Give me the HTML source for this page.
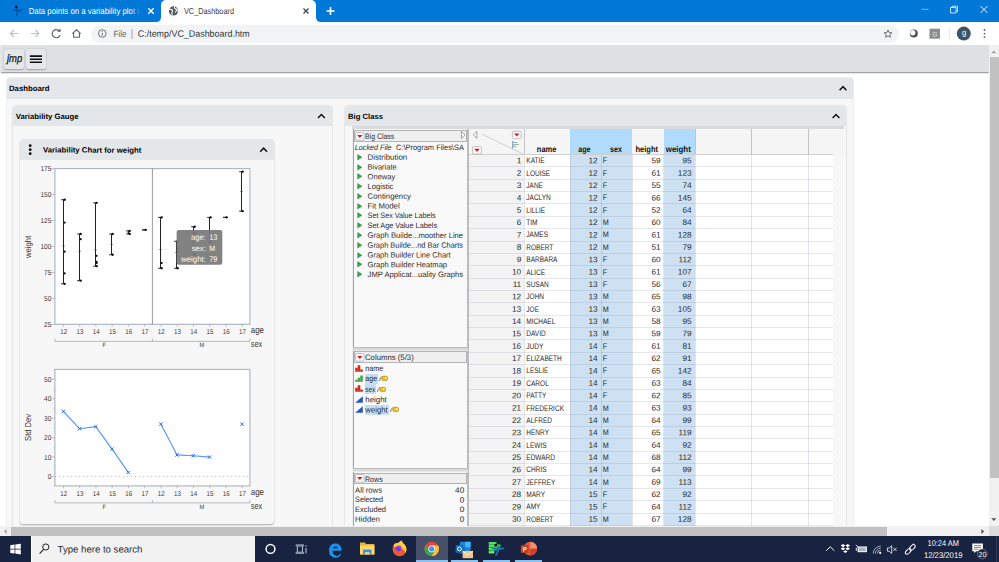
<!DOCTYPE html><html><head><meta charset="utf-8"><title>VC_Dashboard</title><style>html,body{margin:0;padding:0}
body{width:999px;height:562px;overflow:hidden;position:relative;background:#fff;font-family:"Liberation Sans",sans-serif;color:#000}
div,span,svg{position:absolute;box-sizing:border-box}
.t{white-space:nowrap;line-height:1}
#tabbar{left:0;top:0;width:999px;height:22px;background:#0078d7}
#tab2{left:161px;top:0;width:155px;height:22px;background:#fff;border-radius:5px 5px 0 0}
#addr{left:0;top:22px;width:999px;height:23px;background:#fff}
#pill{left:91px;top:25px;width:808px;height:18px;border-radius:9px;background:#f1f3f4}
#jbar{left:0.8px;top:45px;width:988px;height:27.2px;background:#dfe2e5;box-shadow:0 0.6px 1.2px rgba(0,0,0,.45)}
.jbtn{top:49.1px;height:20px;border-radius:2.2px;background:#e5e8eb;box-shadow:0 0.5px 1.6px rgba(0,0,0,.3)}
.panel{background:#f7f7f7;border-radius:3.5px;box-shadow:0 0.3px 1.6px rgba(0,0,0,.3)}
.phead{left:0;top:0;height:20px;background:#e4e7ea;border-radius:3.5px 3.5px 0 0}
.ptitle{font-weight:bold;font-size:9.2px;white-space:nowrap;line-height:1}
/* table */
#tbl{left:0;top:0;width:0;height:0;font-size:9.4px}
.thbg{background:#f5f5f5}
.bh{background:#b0dbfc}
.bc{background:#cde1f3}
.rh{background:#f3f3f3}
.hl{left:469.4px;width:363.9px;height:1px;background:rgba(110,110,150,0.17)}
.vl{top:154.6px;width:1px;height:373px;background:rgba(110,110,150,0.19)}
.vh{top:129px;width:1px;height:25.6px;background:#c4c4c4}
.th{top:144px;height:10px;text-align:center;font-weight:bold;font-size:9.2px;line-height:10px;white-space:nowrap}
.tr{left:0;height:12.4px;width:0}
.c{top:0;height:12.4px;line-height:12.2px;white-space:nowrap;color:#222}
.rn{left:469.4px;width:52px;text-align:right}
.nm{left:526.6px}
.ag{left:570px;width:28.5px;text-align:right}
.sx{left:602.8px}
.ht{left:632.4px;width:28.6px;text-align:right}
.wt{left:663.7px;width:28.8px;text-align:right}
/* left data panel */
.lp{font-size:9.2px;color:#222}
.lp .t{line-height:10px}
/* chart text */
.ax{font-size:7px;fill:#333}
/* taskbar */
#task{left:0;top:535.8px;width:999px;height:26.2px;background:#182241}
.f{transform-origin:0 50%}
svg.tx text{font-family:"Liberation Sans",sans-serif;white-space:pre;text-rendering:geometricPrecision}
</style></head><body>
<div id="jbar"></div>
<div class="jbtn" style="left:4px;width:19.5px"></div>
<div class="jbtn" style="left:26px;width:20px"></div>

<svg style="left:0;top:45px" width="60" height="28" viewBox="0 45 60 28"><path d="M29.9 56.1 H42 M29.9 59.2 H42 M29.9 62.3 H42" stroke="#111" stroke-width="1.6"/></svg>
<div class="panel" style="left:6.7px;top:78.3px;width:846.6px;height:470px"><div class="phead" style="width:846.6px;height:20.3px"></div></div>

<div class="panel" style="left:12.6px;top:105.8px;width:319.7px;height:440px"><div class="phead" style="width:319.7px;height:19.8px"></div></div>

<div class="panel" style="left:19.8px;top:139.9px;width:253.9px;height:384px"><div class="phead" style="width:253.9px;height:19.7px"></div></div>

<div class="panel" style="left:345.3px;top:105.8px;width:501.1px;height:440px"><div class="phead" style="width:501.1px;height:19.8px"></div></div>

<svg style="left:0;top:78px" width="999" height="100" viewBox="0 78 999 100">
<path d="M839.6 90.3 L843 86.7 L846.4 90.3" stroke="#111" stroke-width="1.5" fill="none"/>
<path d="M318.0 118.1 L321.4 114.5 L324.79999999999995 118.1" stroke="#111" stroke-width="1.5" fill="none"/>
<path d="M832.6 118.1 L836 114.5 L839.4 118.1" stroke="#111" stroke-width="1.5" fill="none"/>
<path d="M260.20000000000005 151.8 L263.6 148.2 L267.0 151.8" stroke="#111" stroke-width="1.5" fill="none"/>
<circle cx="30.2" cy="145.7" r="1.4" fill="#111"/>
<circle cx="30.2" cy="149.7" r="1.4" fill="#111"/>
<circle cx="30.2" cy="153.7" r="1.4" fill="#111"/>
</svg>
<svg style="left:0;top:160px" width="340" height="200" viewBox="0 160 340 200">
<rect x="54.9" y="168.6" width="195.00" height="155.70" fill="#fff" stroke="#a9b4bf" stroke-width="1.1"/>
<path d="M152.40 168.6 V324.3" stroke="#707070" stroke-width="0.7"/>
<path d="M51.3 168.60 H54.9" stroke="#98a0a8" stroke-width="0.6"/>
<path d="M51.3 194.55 H54.9" stroke="#98a0a8" stroke-width="0.6"/>
<path d="M51.3 220.50 H54.9" stroke="#98a0a8" stroke-width="0.6"/>
<path d="M51.3 246.45 H54.9" stroke="#98a0a8" stroke-width="0.6"/>
<path d="M51.3 272.40 H54.9" stroke="#98a0a8" stroke-width="0.6"/>
<path d="M51.3 298.35 H54.9" stroke="#98a0a8" stroke-width="0.6"/>
<path d="M51.3 324.30 H54.9" stroke="#98a0a8" stroke-width="0.6"/>
<path d="M63.42 324.3 v2.4" stroke="#98a0a8" stroke-width="0.6"/>
<path d="M79.68 324.3 v2.4" stroke="#98a0a8" stroke-width="0.6"/>
<path d="M95.93 324.3 v2.4" stroke="#98a0a8" stroke-width="0.6"/>
<path d="M112.18 324.3 v2.4" stroke="#98a0a8" stroke-width="0.6"/>
<path d="M128.43 324.3 v2.4" stroke="#98a0a8" stroke-width="0.6"/>
<path d="M144.68 324.3 v2.4" stroke="#98a0a8" stroke-width="0.6"/>
<path d="M160.93 324.3 v2.4" stroke="#98a0a8" stroke-width="0.6"/>
<path d="M177.18 324.3 v2.4" stroke="#98a0a8" stroke-width="0.6"/>
<path d="M193.43 324.3 v2.4" stroke="#98a0a8" stroke-width="0.6"/>
<path d="M209.68 324.3 v2.4" stroke="#98a0a8" stroke-width="0.6"/>
<path d="M225.93 324.3 v2.4" stroke="#98a0a8" stroke-width="0.6"/>
<path d="M242.18 324.3 v2.4" stroke="#98a0a8" stroke-width="0.6"/>
<path d="M54.9 338.4 V341.4 H249.9 V338.4 M152.40 338.4 V341.4" stroke="#98a0a8" stroke-width="0.7" fill="none"/>
<path d="M63.50 199.74 V283.82" stroke="#222" stroke-width="1"/>
<path d="M61.20 199.74 h4.6 M61.20 283.82 h4.6" stroke="#222" stroke-width="1"/>
<path d="M62.10 246.24 h2.8" stroke="#444" stroke-width="0.6"/>
<circle cx="64.60" cy="251.64" r="1.15" fill="#111"/>
<circle cx="64.60" cy="222.58" r="1.15" fill="#111"/>
<circle cx="64.60" cy="273.44" r="1.15" fill="#111"/>
<circle cx="64.60" cy="199.74" r="1.15" fill="#111"/>
<circle cx="64.60" cy="283.82" r="1.15" fill="#111"/>
<path d="M79.50 233.99 V280.70" stroke="#222" stroke-width="1"/>
<path d="M77.20 233.99 h4.6 M77.20 280.70 h4.6" stroke="#222" stroke-width="1"/>
<path d="M78.10 251.29 h2.8" stroke="#444" stroke-width="0.6"/>
<circle cx="80.60" cy="233.99" r="1.15" fill="#111"/>
<circle cx="80.60" cy="239.18" r="1.15" fill="#111"/>
<circle cx="80.60" cy="280.70" r="1.15" fill="#111"/>
<path d="M95.50 202.85 V266.17" stroke="#222" stroke-width="1"/>
<path d="M93.20 202.85 h4.6 M93.20 266.17 h4.6" stroke="#222" stroke-width="1"/>
<path d="M94.10 249.98 h2.8" stroke="#444" stroke-width="0.6"/>
<circle cx="96.60" cy="266.17" r="1.15" fill="#111"/>
<circle cx="96.60" cy="255.79" r="1.15" fill="#111"/>
<circle cx="96.60" cy="202.85" r="1.15" fill="#111"/>
<circle cx="96.60" cy="263.06" r="1.15" fill="#111"/>
<circle cx="96.60" cy="262.02" r="1.15" fill="#111"/>
<path d="M111.50 233.99 V254.75" stroke="#222" stroke-width="1"/>
<path d="M109.20 233.99 h4.6 M109.20 254.75 h4.6" stroke="#222" stroke-width="1"/>
<path d="M110.10 244.37 h2.8" stroke="#444" stroke-width="0.6"/>
<circle cx="112.60" cy="254.75" r="1.15" fill="#111"/>
<circle cx="112.60" cy="233.99" r="1.15" fill="#111"/>
<path d="M128.50 230.88 V233.99" stroke="#222" stroke-width="1"/>
<path d="M126.20 230.88 h4.6 M126.20 233.99 h4.6" stroke="#222" stroke-width="1"/>
<path d="M127.10 232.44 h2.8" stroke="#444" stroke-width="0.6"/>
<circle cx="129.60" cy="233.99" r="1.15" fill="#111"/>
<circle cx="129.60" cy="230.88" r="1.15" fill="#111"/>
<path d="M144.50 229.84 V229.84" stroke="#222" stroke-width="1"/>
<path d="M142.20 229.84 h4.6 M142.20 229.84 h4.6" stroke="#222" stroke-width="1"/>
<path d="M143.10 229.84 h2.8" stroke="#444" stroke-width="0.6"/>
<circle cx="145.60" cy="229.84" r="1.15" fill="#111"/>
<path d="M160.50 217.39 V268.25" stroke="#222" stroke-width="1"/>
<path d="M158.20 217.39 h4.6 M158.20 268.25 h4.6" stroke="#222" stroke-width="1"/>
<path d="M159.10 249.56 h2.8" stroke="#444" stroke-width="0.6"/>
<circle cx="161.60" cy="263.06" r="1.15" fill="#111"/>
<circle cx="161.60" cy="217.39" r="1.15" fill="#111"/>
<circle cx="161.60" cy="268.25" r="1.15" fill="#111"/>
<path d="M176.50 241.26 V268.25" stroke="#222" stroke-width="1"/>
<path d="M174.20 241.26 h4.6 M174.20 268.25 h4.6" stroke="#222" stroke-width="1"/>
<path d="M175.10 252.42 h2.8" stroke="#444" stroke-width="0.6"/>
<circle cx="177.60" cy="248.53" r="1.15" fill="#111"/>
<circle cx="177.60" cy="241.26" r="1.15" fill="#111"/>
<circle cx="177.60" cy="251.64" r="1.15" fill="#111"/>
<circle cx="177.60" cy="268.25" r="1.15" fill="#111"/>
<path d="M193.50 226.73 V254.75" stroke="#222" stroke-width="1"/>
<path d="M191.20 226.73 h4.6 M191.20 254.75 h4.6" stroke="#222" stroke-width="1"/>
<path d="M192.10 242.45 h2.8" stroke="#444" stroke-width="0.6"/>
<circle cx="194.60" cy="253.72" r="1.15" fill="#111"/>
<circle cx="194.60" cy="247.49" r="1.15" fill="#111"/>
<circle cx="194.60" cy="226.73" r="1.15" fill="#111"/>
<circle cx="194.60" cy="254.75" r="1.15" fill="#111"/>
<circle cx="194.60" cy="233.99" r="1.15" fill="#111"/>
<circle cx="194.60" cy="247.49" r="1.15" fill="#111"/>
<circle cx="194.60" cy="232.96" r="1.15" fill="#111"/>
<path d="M209.50 217.39 V242.30" stroke="#222" stroke-width="1"/>
<path d="M207.20 217.39 h4.6 M207.20 242.30 h4.6" stroke="#222" stroke-width="1"/>
<path d="M208.10 235.24 h2.8" stroke="#444" stroke-width="0.6"/>
<circle cx="210.60" cy="217.39" r="1.15" fill="#111"/>
<circle cx="210.60" cy="235.03" r="1.15" fill="#111"/>
<circle cx="210.60" cy="241.26" r="1.15" fill="#111"/>
<circle cx="210.60" cy="242.30" r="1.15" fill="#111"/>
<circle cx="210.60" cy="240.22" r="1.15" fill="#111"/>
<path d="M225.50 217.39 V217.39" stroke="#222" stroke-width="1"/>
<path d="M223.20 217.39 h4.6 M223.20 217.39 h4.6" stroke="#222" stroke-width="1"/>
<path d="M224.10 217.39 h2.8" stroke="#444" stroke-width="0.6"/>
<circle cx="226.60" cy="217.39" r="1.15" fill="#111"/>
<path d="M241.50 171.71 V211.16" stroke="#222" stroke-width="1"/>
<path d="M239.20 171.71 h4.6 M239.20 211.16 h4.6" stroke="#222" stroke-width="1"/>
<path d="M240.10 191.44 h2.8" stroke="#444" stroke-width="0.6"/>
<circle cx="242.60" cy="211.16" r="1.15" fill="#111"/>
<circle cx="242.60" cy="171.71" r="1.15" fill="#111"/>
<rect x="176.6" y="229.9" width="45.7" height="34.9" rx="2.2" fill="#7a7a7a" fill-opacity="0.94"/>
</svg>






























<svg style="left:0;top:360px" width="340" height="170" viewBox="0 360 340 170">
<rect x="54.9" y="369.4" width="195.00" height="116.50" fill="#fff" stroke="#a9b4bf" stroke-width="1.1"/>
<path d="M54.9 476.6 H249.9" stroke="#b4b4b4" stroke-width="0.8" stroke-dasharray="1.3 2.7"/>
<path d="M51.3 379.35 H54.9" stroke="#98a0a8" stroke-width="0.6"/>
<path d="M51.3 398.78 H54.9" stroke="#98a0a8" stroke-width="0.6"/>
<path d="M51.3 418.21 H54.9" stroke="#98a0a8" stroke-width="0.6"/>
<path d="M51.3 437.64 H54.9" stroke="#98a0a8" stroke-width="0.6"/>
<path d="M51.3 457.07 H54.9" stroke="#98a0a8" stroke-width="0.6"/>
<path d="M51.3 476.50 H54.9" stroke="#98a0a8" stroke-width="0.6"/>
<path d="M53.5 466.79 H54.9" stroke="#a9b4bf" stroke-width="0.6"/>
<path d="M53.5 447.36 H54.9" stroke="#a9b4bf" stroke-width="0.6"/>
<path d="M53.5 427.93 H54.9" stroke="#a9b4bf" stroke-width="0.6"/>
<path d="M53.5 408.50 H54.9" stroke="#a9b4bf" stroke-width="0.6"/>
<path d="M53.5 389.06 H54.9" stroke="#a9b4bf" stroke-width="0.6"/>
<path d="M53.5 369.63 H54.9" stroke="#a9b4bf" stroke-width="0.6"/>
<path d="M63.42 485.9 v2.4" stroke="#98a0a8" stroke-width="0.6"/>
<path d="M79.68 485.9 v2.4" stroke="#98a0a8" stroke-width="0.6"/>
<path d="M95.93 485.9 v2.4" stroke="#98a0a8" stroke-width="0.6"/>
<path d="M112.18 485.9 v2.4" stroke="#98a0a8" stroke-width="0.6"/>
<path d="M128.43 485.9 v2.4" stroke="#98a0a8" stroke-width="0.6"/>
<path d="M144.68 485.9 v2.4" stroke="#98a0a8" stroke-width="0.6"/>
<path d="M160.93 485.9 v2.4" stroke="#98a0a8" stroke-width="0.6"/>
<path d="M177.18 485.9 v2.4" stroke="#98a0a8" stroke-width="0.6"/>
<path d="M193.43 485.9 v2.4" stroke="#98a0a8" stroke-width="0.6"/>
<path d="M209.68 485.9 v2.4" stroke="#98a0a8" stroke-width="0.6"/>
<path d="M225.93 485.9 v2.4" stroke="#98a0a8" stroke-width="0.6"/>
<path d="M242.18 485.9 v2.4" stroke="#98a0a8" stroke-width="0.6"/>
<path d="M54.9 500 V502.9 H249.9 V500 M152.40 500 V502.9" stroke="#98a0a8" stroke-width="0.7" fill="none"/>
<path d="M63.32 411.41 L79.58 428.70 L95.83 426.56 L112.08 449.10 L128.33 472.42" stroke="#5a96f0" stroke-width="1.15" fill="none"/>
<path d="M160.83 424.04 L177.08 454.93 L193.33 455.71 L209.58 457.07" stroke="#5a96f0" stroke-width="1.15" fill="none"/>
<path d="M61.62 409.71 l3.4 3.4 M61.62 413.11 l3.4 -3.4" stroke="#2f6fe6" stroke-width="1"/>
<path d="M77.88 427.00 l3.4 3.4 M77.88 430.40 l3.4 -3.4" stroke="#2f6fe6" stroke-width="1"/>
<path d="M94.12 424.86 l3.4 3.4 M94.12 428.26 l3.4 -3.4" stroke="#2f6fe6" stroke-width="1"/>
<path d="M110.38 447.40 l3.4 3.4 M110.38 450.80 l3.4 -3.4" stroke="#2f6fe6" stroke-width="1"/>
<path d="M126.63 470.72 l3.4 3.4 M126.63 474.12 l3.4 -3.4" stroke="#2f6fe6" stroke-width="1"/>
<path d="M159.13 422.34 l3.4 3.4 M159.13 425.74 l3.4 -3.4" stroke="#2f6fe6" stroke-width="1"/>
<path d="M175.38 453.23 l3.4 3.4 M175.38 456.63 l3.4 -3.4" stroke="#2f6fe6" stroke-width="1"/>
<path d="M191.63 454.01 l3.4 3.4 M191.63 457.41 l3.4 -3.4" stroke="#2f6fe6" stroke-width="1"/>
<path d="M207.88 455.37 l3.4 3.4 M207.88 458.77 l3.4 -3.4" stroke="#2f6fe6" stroke-width="1"/>
<path d="M240.38 422.53 l3.4 3.4 M240.38 425.93 l3.4 -3.4" stroke="#2f6fe6" stroke-width="1"/>
</svg>























<div style="left:351.5px;top:125.6px;width:492.3px;height:3.6px;background:#d8dadc"></div>
<div style="left:353.2px;top:129px;width:114.6px;height:1.2px;background:#c9c9c9"></div>
<div style="left:351.5px;top:129px;width:2px;height:398px;background:#eeeeee"></div>
<div style="left:353.2px;top:129.2px;width:114.6px;height:398px;background:#f9f9f9;border-left:1px solid #a4a4a4"></div>
<div style="left:467.4px;top:129px;width:2px;height:398px;background:#bdbdbd"></div>
<div style="left:353.8px;top:130.0px;width:113.6px;height:11.6px;background:#efefef;border:1px solid #b4b4b4"></div>
<svg style="left:354.5px;top:131.70000000000002px" width="10" height="9" viewBox="0 0 10 9"><rect x="0.6" y="0.5" width="8.4" height="7.6" rx="1.3" fill="#fcfcfc" stroke="#a9a9a9" stroke-width="0.7"/><path d="M2.1 2.9 h5.4 l-2.7 3.2 Z" fill="#dc1624"/></svg>

<svg style="left:459px;top:130px" width="8" height="10" viewBox="0 0 8 10"><path d="M2.4 1.4 L6 4.9 L2.4 8.4 Z" fill="#fdfdfd" stroke="#7a7a7a" stroke-width="0.65"/></svg>


<svg style="left:356.6px;top:153.80px" width="6" height="7" viewBox="0 0 6 7"><path d="M0.6 0.5 L5 3.3 L0.6 6.1 Z" fill="#3aa14a" stroke="#2c7a38" stroke-width="0.4"/></svg>

<svg style="left:356.6px;top:163.57px" width="6" height="7" viewBox="0 0 6 7"><path d="M0.6 0.5 L5 3.3 L0.6 6.1 Z" fill="#3aa14a" stroke="#2c7a38" stroke-width="0.4"/></svg>

<svg style="left:356.6px;top:173.34px" width="6" height="7" viewBox="0 0 6 7"><path d="M0.6 0.5 L5 3.3 L0.6 6.1 Z" fill="#3aa14a" stroke="#2c7a38" stroke-width="0.4"/></svg>

<svg style="left:356.6px;top:183.11px" width="6" height="7" viewBox="0 0 6 7"><path d="M0.6 0.5 L5 3.3 L0.6 6.1 Z" fill="#3aa14a" stroke="#2c7a38" stroke-width="0.4"/></svg>

<svg style="left:356.6px;top:192.88px" width="6" height="7" viewBox="0 0 6 7"><path d="M0.6 0.5 L5 3.3 L0.6 6.1 Z" fill="#3aa14a" stroke="#2c7a38" stroke-width="0.4"/></svg>

<svg style="left:356.6px;top:202.65px" width="6" height="7" viewBox="0 0 6 7"><path d="M0.6 0.5 L5 3.3 L0.6 6.1 Z" fill="#3aa14a" stroke="#2c7a38" stroke-width="0.4"/></svg>

<svg style="left:356.6px;top:212.42px" width="6" height="7" viewBox="0 0 6 7"><path d="M0.6 0.5 L5 3.3 L0.6 6.1 Z" fill="#3aa14a" stroke="#2c7a38" stroke-width="0.4"/></svg>

<svg style="left:356.6px;top:222.19px" width="6" height="7" viewBox="0 0 6 7"><path d="M0.6 0.5 L5 3.3 L0.6 6.1 Z" fill="#3aa14a" stroke="#2c7a38" stroke-width="0.4"/></svg>

<svg style="left:356.6px;top:231.96px" width="6" height="7" viewBox="0 0 6 7"><path d="M0.6 0.5 L5 3.3 L0.6 6.1 Z" fill="#3aa14a" stroke="#2c7a38" stroke-width="0.4"/></svg>

<svg style="left:356.6px;top:241.73px" width="6" height="7" viewBox="0 0 6 7"><path d="M0.6 0.5 L5 3.3 L0.6 6.1 Z" fill="#3aa14a" stroke="#2c7a38" stroke-width="0.4"/></svg>

<svg style="left:356.6px;top:251.50px" width="6" height="7" viewBox="0 0 6 7"><path d="M0.6 0.5 L5 3.3 L0.6 6.1 Z" fill="#3aa14a" stroke="#2c7a38" stroke-width="0.4"/></svg>

<svg style="left:356.6px;top:261.27px" width="6" height="7" viewBox="0 0 6 7"><path d="M0.6 0.5 L5 3.3 L0.6 6.1 Z" fill="#3aa14a" stroke="#2c7a38" stroke-width="0.4"/></svg>

<svg style="left:356.6px;top:271.04px" width="6" height="7" viewBox="0 0 6 7"><path d="M0.6 0.5 L5 3.3 L0.6 6.1 Z" fill="#3aa14a" stroke="#2c7a38" stroke-width="0.4"/></svg>

<div style="left:353.4px;top:346.6px;width:114.4px;height:4.2px;background:#d8d8d8;border-top:1px solid #bcbcbc;border-bottom:1px solid #e8e8e8"></div>
<div style="left:353.4px;top:467.8px;width:114.4px;height:4.2px;background:#d8d8d8;border-top:1px solid #bcbcbc;border-bottom:1px solid #e8e8e8"></div>
<div style="left:353.8px;top:351.3px;width:113.6px;height:11.6px;background:#efefef;border:1px solid #b4b4b4"></div>
<svg style="left:354.5px;top:353.0px" width="10" height="9" viewBox="0 0 10 9"><rect x="0.6" y="0.5" width="8.4" height="7.6" rx="1.3" fill="#fcfcfc" stroke="#a9a9a9" stroke-width="0.7"/><path d="M2.1 2.9 h5.4 l-2.7 3.2 Z" fill="#dc1624"/></svg>

<svg style="left:354.7px;top:364.60px" width="8" height="7" viewBox="0 0 8 7"><path d="M0.2 6.8 V2.7 H2.7 V0.3 H5.3 V4.5 H7.8 V6.8 Z" fill="#cc2a1c"/><path d="M2.7 2.7 V6.8 M5.3 4.5 V6.8" stroke="#f4b0a0" stroke-width="0.35"/></svg>

<svg style="left:354.7px;top:375.00px" width="8" height="7" viewBox="0 0 8 7"><path d="M0.2 6.8 V4.8 H2.7 V2.7 H5.3 V0.5 H7.8 V6.8 Z" fill="#3fa246"/><path d="M2.7 4.8 V6.8 M5.3 2.7 V6.8" stroke="#b4e0b4" stroke-width="0.35"/></svg>
<div style="left:365.1px;top:373.60px;width:13.20px;height:10px;background:#c3dff7"></div>

<svg style="left:379.1px;top:375.20px" width="9" height="7" viewBox="0 0 9 7"><path d="M0.4 6 Q1.2 2.4 3 1.4" stroke="#444" stroke-width="0.7" fill="none"/><rect x="2.8" y="1.2" width="5.8" height="4.4" rx="1.6" fill="#f2c21a" stroke="#8a6a08" stroke-width="0.5"/><circle cx="6.9" cy="3.1" r="0.8" fill="#fff"/></svg>
<svg style="left:354.7px;top:385.40px" width="8" height="7" viewBox="0 0 8 7"><path d="M0.2 6.8 V2.7 H2.7 V0.3 H5.3 V4.5 H7.8 V6.8 Z" fill="#cc2a1c"/><path d="M2.7 2.7 V6.8 M5.3 4.5 V6.8" stroke="#f4b0a0" stroke-width="0.35"/></svg>
<div style="left:365.1px;top:384.00px;width:11.20px;height:10px;background:#c3dff7"></div>

<svg style="left:377.4px;top:385.60px" width="9" height="7" viewBox="0 0 9 7"><path d="M0.4 6 Q1.2 2.4 3 1.4" stroke="#444" stroke-width="0.7" fill="none"/><rect x="2.8" y="1.2" width="5.8" height="4.4" rx="1.6" fill="#f2c21a" stroke="#8a6a08" stroke-width="0.5"/><circle cx="6.9" cy="3.1" r="0.8" fill="#fff"/></svg>
<svg style="left:354.7px;top:395.80px" width="8" height="7" viewBox="0 0 8 7"><path d="M0.2 6.8 L7.8 0.2 V6.8 Z" fill="#2c55b9"/></svg>

<svg style="left:354.7px;top:406.20px" width="8" height="7" viewBox="0 0 8 7"><path d="M0.2 6.8 L7.8 0.2 V6.8 Z" fill="#2c55b9"/></svg>
<div style="left:365.1px;top:404.80px;width:23.90px;height:10px;background:#c3dff7"></div>

<svg style="left:390px;top:406.40px" width="9" height="7" viewBox="0 0 9 7"><path d="M0.4 6 Q1.2 2.4 3 1.4" stroke="#444" stroke-width="0.7" fill="none"/><rect x="2.8" y="1.2" width="5.8" height="4.4" rx="1.6" fill="#f2c21a" stroke="#8a6a08" stroke-width="0.5"/><circle cx="6.9" cy="3.1" r="0.8" fill="#fff"/></svg>
<div style="left:353.8px;top:472.70000000000005px;width:113.6px;height:11.6px;background:#efefef;border:1px solid #b4b4b4"></div>
<svg style="left:354.5px;top:474.40000000000003px" width="10" height="9" viewBox="0 0 10 9"><rect x="0.6" y="0.5" width="8.4" height="7.6" rx="1.3" fill="#fcfcfc" stroke="#a9a9a9" stroke-width="0.7"/><path d="M2.1 2.9 h5.4 l-2.7 3.2 Z" fill="#dc1624"/></svg>











<div class="thbg" style="left:469.4px;top:129px;width:374.6px;height:25.6px"></div>
<div style="left:469.4px;top:154.6px;width:363.9px;height:372.4px;background:#fff"></div>
<div class="bh" style="left:570px;top:129px;width:31.6px;height:25.6px"></div>
<div class="bc" style="left:570px;top:154.6px;width:31.6px;height:372.4px"></div>
<div class="bh" style="left:601.6px;top:129px;width:30.8px;height:25.6px"></div>
<div class="bc" style="left:601.6px;top:154.6px;width:30.8px;height:372.4px"></div>
<div class="bh" style="left:663.7px;top:129px;width:31.5px;height:25.6px"></div>
<div class="bc" style="left:663.7px;top:154.6px;width:31.5px;height:372.4px"></div>
<div class="rh" style="left:469.4px;top:154.6px;width:55px;height:372.4px"></div>
<div class="hl" style="top:154.00px"></div>
<div class="hl" style="top:166.36px"></div>
<div class="hl" style="top:178.72px"></div>
<div class="hl" style="top:191.09px"></div>
<div class="hl" style="top:203.45px"></div>
<div class="hl" style="top:215.81px"></div>
<div class="hl" style="top:228.17px"></div>
<div class="hl" style="top:240.53px"></div>
<div class="hl" style="top:252.90px"></div>
<div class="hl" style="top:265.26px"></div>
<div class="hl" style="top:277.62px"></div>
<div class="hl" style="top:289.98px"></div>
<div class="hl" style="top:302.34px"></div>
<div class="hl" style="top:314.71px"></div>
<div class="hl" style="top:327.07px"></div>
<div class="hl" style="top:339.43px"></div>
<div class="hl" style="top:351.79px"></div>
<div class="hl" style="top:364.15px"></div>
<div class="hl" style="top:376.52px"></div>
<div class="hl" style="top:388.88px"></div>
<div class="hl" style="top:401.24px"></div>
<div class="hl" style="top:413.60px"></div>
<div class="hl" style="top:425.96px"></div>
<div class="hl" style="top:438.33px"></div>
<div class="hl" style="top:450.69px"></div>
<div class="hl" style="top:463.05px"></div>
<div class="hl" style="top:475.41px"></div>
<div class="hl" style="top:487.77px"></div>
<div class="hl" style="top:500.14px"></div>
<div class="hl" style="top:512.50px"></div>
<div class="hl" style="top:524.86px"></div>
<div class="vl" style="left:523.90px"></div>
<div class="vl" style="left:569.50px"></div>
<div class="vl" style="left:601.10px"></div>
<div class="vl" style="left:631.90px"></div>
<div class="vl" style="left:663.20px"></div>
<div class="vl" style="left:694.70px"></div>
<div class="vl" style="left:751.30px"></div>
<div class="vl" style="left:807.50px"></div>
<div class="vh" style="left:523.90px"></div>
<div class="vh" style="left:694.70px"></div>
<div class="vh" style="left:751.30px"></div>
<div class="vh" style="left:807.50px"></div>
<div style="left:469.4px;top:154px;width:363.9px;height:1px;background:#cfcfcf"></div>
<div style="left:469.4px;top:154.6px;width:55px;height:373px;background:rgba(0,0,0,0.0)"></div>

























































































































































































<svg style="left:469px;top:129px" width="56" height="26" viewBox="469 129 56 26"><path d="M476.8 131.4 L473.2 134.9 L476.8 138.4 Z" fill="#fcfcfc" stroke="#7a7a7a" stroke-width="0.65"/><path d="M481.8 134 L523.9 154.4" stroke="#c6c6c6" stroke-width="0.8"/><rect x="512.4" y="131.2" width="8.8" height="7.5" rx="1.3" fill="#fcfcfc" stroke="#a9a9a9" stroke-width="0.7"/><path d="M514.10 133.45 h5.4 l-2.7 3.1 Z" fill="#dc1624"/><rect x="472.6" y="146.6" width="8.8" height="7.5" rx="1.3" fill="#fcfcfc" stroke="#a9a9a9" stroke-width="0.7"/><path d="M474.30 148.85 h5.4 l-2.7 3.1 Z" fill="#dc1624"/><path d="M512.6 140.8 V148.4" stroke="#5a78c8" stroke-width="0.7" fill="none"/><path d="M512.9 142.5 h4.2 M512.9 144.6 h6 M512.9 146.6 h3.2" stroke="#7fae86" stroke-width="0.9" fill="none"/></svg>
<svg class="tx" style="left:0;top:0" width="999" height="562" viewBox="0 0 999 562"><text transform="translate(6.97,62.20) rotate(0.03) scale(0.8643,1)" font-size="11.00" fill="#111" font-style="italic" stroke="#111" stroke-width="0.25">jmp</text>
<text transform="translate(9.00,91.00) rotate(0.03)" font-size="7.77" fill="#000" font-weight="bold">Dashboard</text>
<text transform="translate(15.80,119.00) rotate(0.03)" font-size="7.74" fill="#000" font-weight="bold">Variability Gauge</text>
<text transform="translate(43.00,152.60) rotate(0.03)" font-size="7.78" fill="#000" font-weight="bold">Variability Chart for weight</text>
<text transform="translate(348.00,119.00) rotate(0.03)" font-size="7.68" fill="#000" font-weight="bold">Big Class</text>
<text transform="translate(40.44,171.10) rotate(0.03) scale(0.9300,1)" font-size="7.00" fill="#383838">175</text>
<text transform="translate(40.44,197.05) rotate(0.03) scale(0.9300,1)" font-size="7.00" fill="#383838">150</text>
<text transform="translate(40.44,223.00) rotate(0.03) scale(0.9300,1)" font-size="7.00" fill="#383838">125</text>
<text transform="translate(40.44,248.95) rotate(0.03) scale(0.9300,1)" font-size="7.00" fill="#383838">100</text>
<text transform="translate(44.06,274.90) rotate(0.03) scale(0.9300,1)" font-size="7.00" fill="#383838">75</text>
<text transform="translate(44.06,300.85) rotate(0.03) scale(0.9300,1)" font-size="7.00" fill="#383838">50</text>
<text transform="translate(44.06,326.80) rotate(0.03) scale(0.9300,1)" font-size="7.00" fill="#383838">25</text>
<text transform="translate(60.20,333.60) rotate(0.03) scale(0.8800,1)" font-size="7.00" fill="#383838">12</text>
<text transform="translate(76.45,333.60) rotate(0.03) scale(0.8800,1)" font-size="7.00" fill="#383838">13</text>
<text transform="translate(92.70,333.60) rotate(0.03) scale(0.8800,1)" font-size="7.00" fill="#383838">14</text>
<text transform="translate(108.95,333.60) rotate(0.03) scale(0.8800,1)" font-size="7.00" fill="#383838">15</text>
<text transform="translate(125.20,333.60) rotate(0.03) scale(0.8800,1)" font-size="7.00" fill="#383838">16</text>
<text transform="translate(141.45,333.60) rotate(0.03) scale(0.8800,1)" font-size="7.00" fill="#383838">17</text>
<text transform="translate(157.70,333.60) rotate(0.03) scale(0.8800,1)" font-size="7.00" fill="#383838">12</text>
<text transform="translate(173.95,333.60) rotate(0.03) scale(0.8800,1)" font-size="7.00" fill="#383838">13</text>
<text transform="translate(190.20,333.60) rotate(0.03) scale(0.8800,1)" font-size="7.00" fill="#383838">14</text>
<text transform="translate(206.45,333.60) rotate(0.03) scale(0.8800,1)" font-size="7.00" fill="#383838">15</text>
<text transform="translate(222.70,333.60) rotate(0.03) scale(0.8800,1)" font-size="7.00" fill="#383838">16</text>
<text transform="translate(238.95,333.60) rotate(0.03) scale(0.8800,1)" font-size="7.00" fill="#383838">17</text>
<text transform="translate(250.80,333.20) rotate(0.03) scale(0.8421,1)" font-size="9.40" fill="#333">age</text>
<text transform="translate(250.80,346.80) rotate(0.03) scale(0.7829,1)" font-size="9.20" fill="#333">sex</text>
<text transform="translate(102.52,347.00) rotate(0.03) scale(0.9000,1)" font-size="6.30" fill="#383838">F</text>
<text transform="translate(199.39,347.00) rotate(0.03) scale(0.9000,1)" font-size="6.30" fill="#383838">M</text>
<text transform="translate(31.00,246.90) rotate(-89.97) translate(-11.18,0) scale(0.9111,1)" font-size="8.50" fill="#333">weight</text>
<text transform="translate(190.90,239.70) rotate(0.03) scale(0.9875,1)" font-size="7.80" fill="#fff">age:</text>
<text transform="translate(209.20,239.70) rotate(0.03) scale(0.9450,1)" font-size="7.80" fill="#fff">13</text>
<text transform="translate(191.70,250.90) rotate(0.03) scale(0.9921,1)" font-size="7.80" fill="#fff">sex:</text>
<text transform="translate(209.20,250.90) rotate(0.03) scale(0.9086,1)" font-size="7.80" fill="#fff">M</text>
<text transform="translate(181.12,261.70) rotate(0.03)" font-size="7.80" fill="#fff">weight:</text>
<text transform="translate(209.20,261.70) rotate(0.03) scale(0.9450,1)" font-size="7.80" fill="#fff">79</text>
<text transform="translate(44.06,381.85) rotate(0.03) scale(0.9300,1)" font-size="7.00" fill="#383838">50</text>
<text transform="translate(44.06,401.28) rotate(0.03) scale(0.9300,1)" font-size="7.00" fill="#383838">40</text>
<text transform="translate(44.06,420.71) rotate(0.03) scale(0.9300,1)" font-size="7.00" fill="#383838">30</text>
<text transform="translate(44.06,440.14) rotate(0.03) scale(0.9300,1)" font-size="7.00" fill="#383838">20</text>
<text transform="translate(44.06,459.57) rotate(0.03) scale(0.9300,1)" font-size="7.00" fill="#383838">10</text>
<text transform="translate(47.69,479.00) rotate(0.03) scale(0.9300,1)" font-size="7.00" fill="#383838">0</text>
<text transform="translate(60.20,495.50) rotate(0.03) scale(0.8800,1)" font-size="7.00" fill="#383838">12</text>
<text transform="translate(76.45,495.50) rotate(0.03) scale(0.8800,1)" font-size="7.00" fill="#383838">13</text>
<text transform="translate(92.70,495.50) rotate(0.03) scale(0.8800,1)" font-size="7.00" fill="#383838">14</text>
<text transform="translate(108.95,495.50) rotate(0.03) scale(0.8800,1)" font-size="7.00" fill="#383838">15</text>
<text transform="translate(125.20,495.50) rotate(0.03) scale(0.8800,1)" font-size="7.00" fill="#383838">16</text>
<text transform="translate(141.45,495.50) rotate(0.03) scale(0.8800,1)" font-size="7.00" fill="#383838">17</text>
<text transform="translate(157.70,495.50) rotate(0.03) scale(0.8800,1)" font-size="7.00" fill="#383838">12</text>
<text transform="translate(173.95,495.50) rotate(0.03) scale(0.8800,1)" font-size="7.00" fill="#383838">13</text>
<text transform="translate(190.20,495.50) rotate(0.03) scale(0.8800,1)" font-size="7.00" fill="#383838">14</text>
<text transform="translate(206.45,495.50) rotate(0.03) scale(0.8800,1)" font-size="7.00" fill="#383838">15</text>
<text transform="translate(222.70,495.50) rotate(0.03) scale(0.8800,1)" font-size="7.00" fill="#383838">16</text>
<text transform="translate(238.95,495.50) rotate(0.03) scale(0.8800,1)" font-size="7.00" fill="#383838">17</text>
<text transform="translate(250.80,495.30) rotate(0.03) scale(0.8421,1)" font-size="9.40" fill="#333">age</text>
<text transform="translate(250.80,508.70) rotate(0.03) scale(0.7829,1)" font-size="9.20" fill="#333">sex</text>
<text transform="translate(102.52,508.80) rotate(0.03) scale(0.9000,1)" font-size="6.30" fill="#383838">F</text>
<text transform="translate(199.39,508.80) rotate(0.03) scale(0.9000,1)" font-size="6.30" fill="#383838">M</text>
<text transform="translate(31.20,427.40) rotate(-89.97) translate(-13.50,0) scale(0.8724,1)" font-size="8.70" fill="#333">Std Dev</text>
<text transform="translate(365.00,138.90) rotate(0.03) scale(0.8778,1)" font-size="7.90" fill="#2b2b2b">Big Class</text>
<text transform="translate(354.80,149.90) rotate(0.03) scale(0.9224,1)" font-size="7.80" fill="#2b2b2b" font-style="italic">Locked File</text>
<text transform="translate(396.00,149.90) rotate(0.03) scale(0.9550,1)" font-size="7.80" fill="#2b2b2b">C:\Program Files\SA</text>
<text transform="translate(367.60,159.70) rotate(0.03) scale(1.0174,1)" font-size="7.80" fill="#2b2b2b">Distribution</text>
<text transform="translate(367.60,169.47) rotate(0.03) scale(0.9558,1)" font-size="7.80" fill="#2b2b2b">Bivariate</text>
<text transform="translate(367.60,179.24) rotate(0.03) scale(0.9648,1)" font-size="7.80" fill="#2b2b2b">Oneway</text>
<text transform="translate(367.60,189.01) rotate(0.03) scale(0.9757,1)" font-size="7.80" fill="#2b2b2b">Logistic</text>
<text transform="translate(367.60,198.78) rotate(0.03)" font-size="7.80" fill="#2b2b2b">Contingency</text>
<text transform="translate(367.60,208.55) rotate(0.03)" font-size="7.80" fill="#2b2b2b">Fit Model</text>
<text transform="translate(367.60,218.32) rotate(0.03) scale(0.9202,1)" font-size="7.80" fill="#2b2b2b">Set Sex Value Labels</text>
<text transform="translate(367.60,228.09) rotate(0.03) scale(0.9403,1)" font-size="7.80" fill="#2b2b2b">Set Age Value Labels</text>
<text transform="translate(367.60,237.86) rotate(0.03) scale(0.9789,1)" font-size="7.80" fill="#2b2b2b">Graph Builde...moother Line</text>
<text transform="translate(367.60,247.63) rotate(0.03) scale(0.9536,1)" font-size="7.80" fill="#2b2b2b">Graph Builde...nd Bar Charts</text>
<text transform="translate(367.60,257.40) rotate(0.03) scale(0.9631,1)" font-size="7.80" fill="#2b2b2b">Graph Builder Line Chart</text>
<text transform="translate(367.60,267.17) rotate(0.03) scale(0.9702,1)" font-size="7.80" fill="#2b2b2b">Graph Builder Heatmap</text>
<text transform="translate(367.60,276.94) rotate(0.03) scale(0.9805,1)" font-size="7.80" fill="#2b2b2b">JMP Applicat...uality Graphs</text>
<text transform="translate(365.00,360.10) rotate(0.03) scale(0.9836,1)" font-size="7.90" fill="#2b2b2b">Columns (5/3)</text>
<text transform="translate(365.30,371.00) rotate(0.03) scale(0.9155,1)" font-size="7.90" fill="#2b2b2b">name</text>
<text transform="translate(365.30,381.40) rotate(0.03) scale(0.8958,1)" font-size="7.90" fill="#2b2b2b">age</text>
<text transform="translate(365.30,391.80) rotate(0.03) scale(0.7978,1)" font-size="7.90" fill="#2b2b2b">sex</text>
<text transform="translate(365.30,402.20) rotate(0.03) scale(0.9941,1)" font-size="7.90" fill="#2b2b2b">height</text>
<text transform="translate(365.32,412.60) rotate(0.03) scale(0.9847,1)" font-size="7.90" fill="#2b2b2b">weight</text>
<text transform="translate(365.00,481.80) rotate(0.03) scale(0.8962,1)" font-size="7.90" fill="#2b2b2b">Rows</text>
<text transform="translate(355.10,492.70) rotate(0.03) scale(0.9853,1)" font-size="7.80" fill="#2b2b2b">All rows</text>
<text transform="translate(455.09,492.70) rotate(0.03) scale(1.0500,1)" font-size="7.80" fill="#2b2b2b">40</text>
<text transform="translate(355.10,502.40) rotate(0.03) scale(0.9222,1)" font-size="7.80" fill="#2b2b2b">Selected</text>
<text transform="translate(459.65,502.40) rotate(0.03) scale(1.0500,1)" font-size="7.80" fill="#2b2b2b">0</text>
<text transform="translate(355.10,512.10) rotate(0.03) scale(0.9627,1)" font-size="7.80" fill="#2b2b2b">Excluded</text>
<text transform="translate(459.65,512.10) rotate(0.03) scale(1.0500,1)" font-size="7.80" fill="#2b2b2b">0</text>
<text transform="translate(355.10,521.80) rotate(0.03) scale(1.0070,1)" font-size="7.80" fill="#2b2b2b">Hidden</text>
<text transform="translate(459.65,521.80) rotate(0.03) scale(1.0500,1)" font-size="7.80" fill="#2b2b2b">0</text>
<text transform="translate(355.10,531.50) rotate(0.03) scale(0.9795,1)" font-size="7.80" fill="#2b2b2b">Labelled</text>
<text transform="translate(459.65,531.50) rotate(0.03) scale(1.0500,1)" font-size="7.80" fill="#2b2b2b">0</text>
<text transform="translate(536.80,151.60) rotate(0.03) scale(0.8724,1)" font-size="8.60" fill="#111" font-weight="bold">name</text>
<text transform="translate(578.20,151.60) rotate(0.03) scale(0.8236,1)" font-size="8.60" fill="#111" font-weight="bold">age</text>
<text transform="translate(610.00,151.60) rotate(0.03) scale(0.8298,1)" font-size="8.60" fill="#111" font-weight="bold">sex</text>
<text transform="translate(635.50,151.60) rotate(0.03) scale(0.8721,1)" font-size="8.60" fill="#111" font-weight="bold">height</text>
<text transform="translate(665.84,151.60) rotate(0.03) scale(0.9163,1)" font-size="8.60" fill="#111" font-weight="bold">weight</text>
<text transform="translate(516.63,163.30) rotate(0.03) scale(1.0300,1)" font-size="8.00" fill="#2b2b2b">1</text>
<text transform="translate(526.30,163.30) rotate(0.03) scale(0.8150,1)" font-size="8.00" fill="#2b2b2b">KATIE</text>
<text transform="translate(588.53,163.30) rotate(0.03) scale(1.0300,1)" font-size="8.00" fill="#2b2b2b">12</text>
<text transform="translate(602.70,163.30) rotate(0.03) scale(0.9000,1)" font-size="8.00" fill="#2b2b2b">F</text>
<text transform="translate(651.53,163.30) rotate(0.03) scale(1.0300,1)" font-size="8.00" fill="#2b2b2b">59</text>
<text transform="translate(682.43,163.30) rotate(0.03) scale(1.0300,1)" font-size="8.00" fill="#2b2b2b">95</text>
<text transform="translate(516.63,175.66) rotate(0.03) scale(1.0300,1)" font-size="8.00" fill="#2b2b2b">2</text>
<text transform="translate(526.30,175.66) rotate(0.03) scale(0.8150,1)" font-size="8.00" fill="#2b2b2b">LOUISE</text>
<text transform="translate(588.53,175.66) rotate(0.03) scale(1.0300,1)" font-size="8.00" fill="#2b2b2b">12</text>
<text transform="translate(602.70,175.66) rotate(0.03) scale(0.9000,1)" font-size="8.00" fill="#2b2b2b">F</text>
<text transform="translate(651.53,175.66) rotate(0.03) scale(1.0300,1)" font-size="8.00" fill="#2b2b2b">61</text>
<text transform="translate(677.86,175.66) rotate(0.03) scale(1.0300,1)" font-size="8.00" fill="#2b2b2b">123</text>
<text transform="translate(516.63,188.02) rotate(0.03) scale(1.0300,1)" font-size="8.00" fill="#2b2b2b">3</text>
<text transform="translate(526.30,188.02) rotate(0.03) scale(0.8150,1)" font-size="8.00" fill="#2b2b2b">JANE</text>
<text transform="translate(588.53,188.02) rotate(0.03) scale(1.0300,1)" font-size="8.00" fill="#2b2b2b">12</text>
<text transform="translate(602.70,188.02) rotate(0.03) scale(0.9000,1)" font-size="8.00" fill="#2b2b2b">F</text>
<text transform="translate(651.53,188.02) rotate(0.03) scale(1.0300,1)" font-size="8.00" fill="#2b2b2b">55</text>
<text transform="translate(682.43,188.02) rotate(0.03) scale(1.0300,1)" font-size="8.00" fill="#2b2b2b">74</text>
<text transform="translate(516.63,200.39) rotate(0.03) scale(1.0300,1)" font-size="8.00" fill="#2b2b2b">4</text>
<text transform="translate(526.30,200.39) rotate(0.03) scale(0.8150,1)" font-size="8.00" fill="#2b2b2b">JACLYN</text>
<text transform="translate(588.53,200.39) rotate(0.03) scale(1.0300,1)" font-size="8.00" fill="#2b2b2b">12</text>
<text transform="translate(602.70,200.39) rotate(0.03) scale(0.9000,1)" font-size="8.00" fill="#2b2b2b">F</text>
<text transform="translate(651.53,200.39) rotate(0.03) scale(1.0300,1)" font-size="8.00" fill="#2b2b2b">66</text>
<text transform="translate(677.86,200.39) rotate(0.03) scale(1.0300,1)" font-size="8.00" fill="#2b2b2b">145</text>
<text transform="translate(516.63,212.75) rotate(0.03) scale(1.0300,1)" font-size="8.00" fill="#2b2b2b">5</text>
<text transform="translate(526.30,212.75) rotate(0.03) scale(0.8150,1)" font-size="8.00" fill="#2b2b2b">LILLIE</text>
<text transform="translate(588.53,212.75) rotate(0.03) scale(1.0300,1)" font-size="8.00" fill="#2b2b2b">12</text>
<text transform="translate(602.70,212.75) rotate(0.03) scale(0.9000,1)" font-size="8.00" fill="#2b2b2b">F</text>
<text transform="translate(651.53,212.75) rotate(0.03) scale(1.0300,1)" font-size="8.00" fill="#2b2b2b">52</text>
<text transform="translate(682.43,212.75) rotate(0.03) scale(1.0300,1)" font-size="8.00" fill="#2b2b2b">64</text>
<text transform="translate(516.63,225.11) rotate(0.03) scale(1.0300,1)" font-size="8.00" fill="#2b2b2b">6</text>
<text transform="translate(526.30,225.11) rotate(0.03) scale(0.8150,1)" font-size="8.00" fill="#2b2b2b">TIM</text>
<text transform="translate(588.53,225.11) rotate(0.03) scale(1.0300,1)" font-size="8.00" fill="#2b2b2b">12</text>
<text transform="translate(602.70,225.11) rotate(0.03) scale(0.9000,1)" font-size="8.00" fill="#2b2b2b">M</text>
<text transform="translate(651.53,225.11) rotate(0.03) scale(1.0300,1)" font-size="8.00" fill="#2b2b2b">60</text>
<text transform="translate(682.43,225.11) rotate(0.03) scale(1.0300,1)" font-size="8.00" fill="#2b2b2b">84</text>
<text transform="translate(516.63,237.47) rotate(0.03) scale(1.0300,1)" font-size="8.00" fill="#2b2b2b">7</text>
<text transform="translate(526.30,237.47) rotate(0.03) scale(0.8150,1)" font-size="8.00" fill="#2b2b2b">JAMES</text>
<text transform="translate(588.53,237.47) rotate(0.03) scale(1.0300,1)" font-size="8.00" fill="#2b2b2b">12</text>
<text transform="translate(602.70,237.47) rotate(0.03) scale(0.9000,1)" font-size="8.00" fill="#2b2b2b">M</text>
<text transform="translate(651.53,237.47) rotate(0.03) scale(1.0300,1)" font-size="8.00" fill="#2b2b2b">61</text>
<text transform="translate(677.86,237.47) rotate(0.03) scale(1.0300,1)" font-size="8.00" fill="#2b2b2b">128</text>
<text transform="translate(516.63,249.83) rotate(0.03) scale(1.0300,1)" font-size="8.00" fill="#2b2b2b">8</text>
<text transform="translate(526.30,249.83) rotate(0.03) scale(0.8150,1)" font-size="8.00" fill="#2b2b2b">ROBERT</text>
<text transform="translate(588.53,249.83) rotate(0.03) scale(1.0300,1)" font-size="8.00" fill="#2b2b2b">12</text>
<text transform="translate(602.70,249.83) rotate(0.03) scale(0.9000,1)" font-size="8.00" fill="#2b2b2b">M</text>
<text transform="translate(651.53,249.83) rotate(0.03) scale(1.0300,1)" font-size="8.00" fill="#2b2b2b">51</text>
<text transform="translate(682.43,249.83) rotate(0.03) scale(1.0300,1)" font-size="8.00" fill="#2b2b2b">79</text>
<text transform="translate(516.63,262.20) rotate(0.03) scale(1.0300,1)" font-size="8.00" fill="#2b2b2b">9</text>
<text transform="translate(526.30,262.20) rotate(0.03) scale(0.8150,1)" font-size="8.00" fill="#2b2b2b">BARBARA</text>
<text transform="translate(588.53,262.20) rotate(0.03) scale(1.0300,1)" font-size="8.00" fill="#2b2b2b">13</text>
<text transform="translate(602.70,262.20) rotate(0.03) scale(0.9000,1)" font-size="8.00" fill="#2b2b2b">F</text>
<text transform="translate(651.53,262.20) rotate(0.03) scale(1.0300,1)" font-size="8.00" fill="#2b2b2b">60</text>
<text transform="translate(678.46,262.20) rotate(0.03) scale(1.0300,1)" font-size="8.00" fill="#2b2b2b">112</text>
<text transform="translate(512.03,274.56) rotate(0.03) scale(1.0300,1)" font-size="8.00" fill="#2b2b2b">10</text>
<text transform="translate(526.30,274.56) rotate(0.03) scale(0.8150,1)" font-size="8.00" fill="#2b2b2b">ALICE</text>
<text transform="translate(588.53,274.56) rotate(0.03) scale(1.0300,1)" font-size="8.00" fill="#2b2b2b">13</text>
<text transform="translate(602.70,274.56) rotate(0.03) scale(0.9000,1)" font-size="8.00" fill="#2b2b2b">F</text>
<text transform="translate(651.53,274.56) rotate(0.03) scale(1.0300,1)" font-size="8.00" fill="#2b2b2b">61</text>
<text transform="translate(677.86,274.56) rotate(0.03) scale(1.0300,1)" font-size="8.00" fill="#2b2b2b">107</text>
<text transform="translate(512.65,286.92) rotate(0.03) scale(1.0300,1)" font-size="8.00" fill="#2b2b2b">11</text>
<text transform="translate(526.30,286.92) rotate(0.03) scale(0.8150,1)" font-size="8.00" fill="#2b2b2b">SUSAN</text>
<text transform="translate(588.53,286.92) rotate(0.03) scale(1.0300,1)" font-size="8.00" fill="#2b2b2b">13</text>
<text transform="translate(602.70,286.92) rotate(0.03) scale(0.9000,1)" font-size="8.00" fill="#2b2b2b">F</text>
<text transform="translate(651.53,286.92) rotate(0.03) scale(1.0300,1)" font-size="8.00" fill="#2b2b2b">56</text>
<text transform="translate(682.43,286.92) rotate(0.03) scale(1.0300,1)" font-size="8.00" fill="#2b2b2b">67</text>
<text transform="translate(512.03,299.28) rotate(0.03) scale(1.0300,1)" font-size="8.00" fill="#2b2b2b">12</text>
<text transform="translate(526.30,299.28) rotate(0.03) scale(0.8150,1)" font-size="8.00" fill="#2b2b2b">JOHN</text>
<text transform="translate(588.53,299.28) rotate(0.03) scale(1.0300,1)" font-size="8.00" fill="#2b2b2b">13</text>
<text transform="translate(602.70,299.28) rotate(0.03) scale(0.9000,1)" font-size="8.00" fill="#2b2b2b">M</text>
<text transform="translate(651.53,299.28) rotate(0.03) scale(1.0300,1)" font-size="8.00" fill="#2b2b2b">65</text>
<text transform="translate(682.43,299.28) rotate(0.03) scale(1.0300,1)" font-size="8.00" fill="#2b2b2b">98</text>
<text transform="translate(512.03,311.64) rotate(0.03) scale(1.0300,1)" font-size="8.00" fill="#2b2b2b">13</text>
<text transform="translate(526.30,311.64) rotate(0.03) scale(0.8150,1)" font-size="8.00" fill="#2b2b2b">JOE</text>
<text transform="translate(588.53,311.64) rotate(0.03) scale(1.0300,1)" font-size="8.00" fill="#2b2b2b">13</text>
<text transform="translate(602.70,311.64) rotate(0.03) scale(0.9000,1)" font-size="8.00" fill="#2b2b2b">M</text>
<text transform="translate(651.53,311.64) rotate(0.03) scale(1.0300,1)" font-size="8.00" fill="#2b2b2b">63</text>
<text transform="translate(677.86,311.64) rotate(0.03) scale(1.0300,1)" font-size="8.00" fill="#2b2b2b">105</text>
<text transform="translate(512.03,324.01) rotate(0.03) scale(1.0300,1)" font-size="8.00" fill="#2b2b2b">14</text>
<text transform="translate(526.30,324.01) rotate(0.03) scale(0.8150,1)" font-size="8.00" fill="#2b2b2b">MICHAEL</text>
<text transform="translate(588.53,324.01) rotate(0.03) scale(1.0300,1)" font-size="8.00" fill="#2b2b2b">13</text>
<text transform="translate(602.70,324.01) rotate(0.03) scale(0.9000,1)" font-size="8.00" fill="#2b2b2b">M</text>
<text transform="translate(651.53,324.01) rotate(0.03) scale(1.0300,1)" font-size="8.00" fill="#2b2b2b">58</text>
<text transform="translate(682.43,324.01) rotate(0.03) scale(1.0300,1)" font-size="8.00" fill="#2b2b2b">95</text>
<text transform="translate(512.03,336.37) rotate(0.03) scale(1.0300,1)" font-size="8.00" fill="#2b2b2b">15</text>
<text transform="translate(526.30,336.37) rotate(0.03) scale(0.8150,1)" font-size="8.00" fill="#2b2b2b">DAVID</text>
<text transform="translate(588.53,336.37) rotate(0.03) scale(1.0300,1)" font-size="8.00" fill="#2b2b2b">13</text>
<text transform="translate(602.70,336.37) rotate(0.03) scale(0.9000,1)" font-size="8.00" fill="#2b2b2b">M</text>
<text transform="translate(651.53,336.37) rotate(0.03) scale(1.0300,1)" font-size="8.00" fill="#2b2b2b">59</text>
<text transform="translate(682.43,336.37) rotate(0.03) scale(1.0300,1)" font-size="8.00" fill="#2b2b2b">79</text>
<text transform="translate(512.03,348.73) rotate(0.03) scale(1.0300,1)" font-size="8.00" fill="#2b2b2b">16</text>
<text transform="translate(526.30,348.73) rotate(0.03) scale(0.8150,1)" font-size="8.00" fill="#2b2b2b">JUDY</text>
<text transform="translate(588.53,348.73) rotate(0.03) scale(1.0300,1)" font-size="8.00" fill="#2b2b2b">14</text>
<text transform="translate(602.70,348.73) rotate(0.03) scale(0.9000,1)" font-size="8.00" fill="#2b2b2b">F</text>
<text transform="translate(651.53,348.73) rotate(0.03) scale(1.0300,1)" font-size="8.00" fill="#2b2b2b">61</text>
<text transform="translate(682.43,348.73) rotate(0.03) scale(1.0300,1)" font-size="8.00" fill="#2b2b2b">81</text>
<text transform="translate(512.03,361.09) rotate(0.03) scale(1.0300,1)" font-size="8.00" fill="#2b2b2b">17</text>
<text transform="translate(526.30,361.09) rotate(0.03) scale(0.8150,1)" font-size="8.00" fill="#2b2b2b">ELIZABETH</text>
<text transform="translate(588.53,361.09) rotate(0.03) scale(1.0300,1)" font-size="8.00" fill="#2b2b2b">14</text>
<text transform="translate(602.70,361.09) rotate(0.03) scale(0.9000,1)" font-size="8.00" fill="#2b2b2b">F</text>
<text transform="translate(651.53,361.09) rotate(0.03) scale(1.0300,1)" font-size="8.00" fill="#2b2b2b">62</text>
<text transform="translate(682.43,361.09) rotate(0.03) scale(1.0300,1)" font-size="8.00" fill="#2b2b2b">91</text>
<text transform="translate(512.03,373.45) rotate(0.03) scale(1.0300,1)" font-size="8.00" fill="#2b2b2b">18</text>
<text transform="translate(526.30,373.45) rotate(0.03) scale(0.8150,1)" font-size="8.00" fill="#2b2b2b">LESLIE</text>
<text transform="translate(588.53,373.45) rotate(0.03) scale(1.0300,1)" font-size="8.00" fill="#2b2b2b">14</text>
<text transform="translate(602.70,373.45) rotate(0.03) scale(0.9000,1)" font-size="8.00" fill="#2b2b2b">F</text>
<text transform="translate(651.53,373.45) rotate(0.03) scale(1.0300,1)" font-size="8.00" fill="#2b2b2b">65</text>
<text transform="translate(677.86,373.45) rotate(0.03) scale(1.0300,1)" font-size="8.00" fill="#2b2b2b">142</text>
<text transform="translate(512.03,385.82) rotate(0.03) scale(1.0300,1)" font-size="8.00" fill="#2b2b2b">19</text>
<text transform="translate(526.30,385.82) rotate(0.03) scale(0.8150,1)" font-size="8.00" fill="#2b2b2b">CAROL</text>
<text transform="translate(588.53,385.82) rotate(0.03) scale(1.0300,1)" font-size="8.00" fill="#2b2b2b">14</text>
<text transform="translate(602.70,385.82) rotate(0.03) scale(0.9000,1)" font-size="8.00" fill="#2b2b2b">F</text>
<text transform="translate(651.53,385.82) rotate(0.03) scale(1.0300,1)" font-size="8.00" fill="#2b2b2b">63</text>
<text transform="translate(682.43,385.82) rotate(0.03) scale(1.0300,1)" font-size="8.00" fill="#2b2b2b">84</text>
<text transform="translate(512.03,398.18) rotate(0.03) scale(1.0300,1)" font-size="8.00" fill="#2b2b2b">20</text>
<text transform="translate(526.30,398.18) rotate(0.03) scale(0.8150,1)" font-size="8.00" fill="#2b2b2b">PATTY</text>
<text transform="translate(588.53,398.18) rotate(0.03) scale(1.0300,1)" font-size="8.00" fill="#2b2b2b">14</text>
<text transform="translate(602.70,398.18) rotate(0.03) scale(0.9000,1)" font-size="8.00" fill="#2b2b2b">F</text>
<text transform="translate(651.53,398.18) rotate(0.03) scale(1.0300,1)" font-size="8.00" fill="#2b2b2b">62</text>
<text transform="translate(682.43,398.18) rotate(0.03) scale(1.0300,1)" font-size="8.00" fill="#2b2b2b">85</text>
<text transform="translate(512.03,410.54) rotate(0.03) scale(1.0300,1)" font-size="8.00" fill="#2b2b2b">21</text>
<text transform="translate(526.30,410.54) rotate(0.03) scale(0.8150,1)" font-size="8.00" fill="#2b2b2b">FREDERICK</text>
<text transform="translate(588.53,410.54) rotate(0.03) scale(1.0300,1)" font-size="8.00" fill="#2b2b2b">14</text>
<text transform="translate(602.70,410.54) rotate(0.03) scale(0.9000,1)" font-size="8.00" fill="#2b2b2b">M</text>
<text transform="translate(651.53,410.54) rotate(0.03) scale(1.0300,1)" font-size="8.00" fill="#2b2b2b">63</text>
<text transform="translate(682.43,410.54) rotate(0.03) scale(1.0300,1)" font-size="8.00" fill="#2b2b2b">93</text>
<text transform="translate(512.03,422.90) rotate(0.03) scale(1.0300,1)" font-size="8.00" fill="#2b2b2b">22</text>
<text transform="translate(526.30,422.90) rotate(0.03) scale(0.8150,1)" font-size="8.00" fill="#2b2b2b">ALFRED</text>
<text transform="translate(588.53,422.90) rotate(0.03) scale(1.0300,1)" font-size="8.00" fill="#2b2b2b">14</text>
<text transform="translate(602.70,422.90) rotate(0.03) scale(0.9000,1)" font-size="8.00" fill="#2b2b2b">M</text>
<text transform="translate(651.53,422.90) rotate(0.03) scale(1.0300,1)" font-size="8.00" fill="#2b2b2b">64</text>
<text transform="translate(682.43,422.90) rotate(0.03) scale(1.0300,1)" font-size="8.00" fill="#2b2b2b">99</text>
<text transform="translate(512.03,435.26) rotate(0.03) scale(1.0300,1)" font-size="8.00" fill="#2b2b2b">23</text>
<text transform="translate(526.30,435.26) rotate(0.03) scale(0.8150,1)" font-size="8.00" fill="#2b2b2b">HENRY</text>
<text transform="translate(588.53,435.26) rotate(0.03) scale(1.0300,1)" font-size="8.00" fill="#2b2b2b">14</text>
<text transform="translate(602.70,435.26) rotate(0.03) scale(0.9000,1)" font-size="8.00" fill="#2b2b2b">M</text>
<text transform="translate(651.53,435.26) rotate(0.03) scale(1.0300,1)" font-size="8.00" fill="#2b2b2b">65</text>
<text transform="translate(678.46,435.26) rotate(0.03) scale(1.0300,1)" font-size="8.00" fill="#2b2b2b">119</text>
<text transform="translate(512.03,447.63) rotate(0.03) scale(1.0300,1)" font-size="8.00" fill="#2b2b2b">24</text>
<text transform="translate(526.30,447.63) rotate(0.03) scale(0.8150,1)" font-size="8.00" fill="#2b2b2b">LEWIS</text>
<text transform="translate(588.53,447.63) rotate(0.03) scale(1.0300,1)" font-size="8.00" fill="#2b2b2b">14</text>
<text transform="translate(602.70,447.63) rotate(0.03) scale(0.9000,1)" font-size="8.00" fill="#2b2b2b">M</text>
<text transform="translate(651.53,447.63) rotate(0.03) scale(1.0300,1)" font-size="8.00" fill="#2b2b2b">64</text>
<text transform="translate(682.43,447.63) rotate(0.03) scale(1.0300,1)" font-size="8.00" fill="#2b2b2b">92</text>
<text transform="translate(512.03,459.99) rotate(0.03) scale(1.0300,1)" font-size="8.00" fill="#2b2b2b">25</text>
<text transform="translate(526.30,459.99) rotate(0.03) scale(0.8150,1)" font-size="8.00" fill="#2b2b2b">EDWARD</text>
<text transform="translate(588.53,459.99) rotate(0.03) scale(1.0300,1)" font-size="8.00" fill="#2b2b2b">14</text>
<text transform="translate(602.70,459.99) rotate(0.03) scale(0.9000,1)" font-size="8.00" fill="#2b2b2b">M</text>
<text transform="translate(651.53,459.99) rotate(0.03) scale(1.0300,1)" font-size="8.00" fill="#2b2b2b">68</text>
<text transform="translate(678.46,459.99) rotate(0.03) scale(1.0300,1)" font-size="8.00" fill="#2b2b2b">112</text>
<text transform="translate(512.03,472.35) rotate(0.03) scale(1.0300,1)" font-size="8.00" fill="#2b2b2b">26</text>
<text transform="translate(526.30,472.35) rotate(0.03) scale(0.8150,1)" font-size="8.00" fill="#2b2b2b">CHRIS</text>
<text transform="translate(588.53,472.35) rotate(0.03) scale(1.0300,1)" font-size="8.00" fill="#2b2b2b">14</text>
<text transform="translate(602.70,472.35) rotate(0.03) scale(0.9000,1)" font-size="8.00" fill="#2b2b2b">M</text>
<text transform="translate(651.53,472.35) rotate(0.03) scale(1.0300,1)" font-size="8.00" fill="#2b2b2b">64</text>
<text transform="translate(682.43,472.35) rotate(0.03) scale(1.0300,1)" font-size="8.00" fill="#2b2b2b">99</text>
<text transform="translate(512.03,484.71) rotate(0.03) scale(1.0300,1)" font-size="8.00" fill="#2b2b2b">27</text>
<text transform="translate(526.30,484.71) rotate(0.03) scale(0.8150,1)" font-size="8.00" fill="#2b2b2b">JEFFREY</text>
<text transform="translate(588.53,484.71) rotate(0.03) scale(1.0300,1)" font-size="8.00" fill="#2b2b2b">14</text>
<text transform="translate(602.70,484.71) rotate(0.03) scale(0.9000,1)" font-size="8.00" fill="#2b2b2b">M</text>
<text transform="translate(651.53,484.71) rotate(0.03) scale(1.0300,1)" font-size="8.00" fill="#2b2b2b">69</text>
<text transform="translate(678.46,484.71) rotate(0.03) scale(1.0300,1)" font-size="8.00" fill="#2b2b2b">113</text>
<text transform="translate(512.03,497.07) rotate(0.03) scale(1.0300,1)" font-size="8.00" fill="#2b2b2b">28</text>
<text transform="translate(526.30,497.07) rotate(0.03) scale(0.8150,1)" font-size="8.00" fill="#2b2b2b">MARY</text>
<text transform="translate(588.53,497.07) rotate(0.03) scale(1.0300,1)" font-size="8.00" fill="#2b2b2b">15</text>
<text transform="translate(602.70,497.07) rotate(0.03) scale(0.9000,1)" font-size="8.00" fill="#2b2b2b">F</text>
<text transform="translate(651.53,497.07) rotate(0.03) scale(1.0300,1)" font-size="8.00" fill="#2b2b2b">62</text>
<text transform="translate(682.43,497.07) rotate(0.03) scale(1.0300,1)" font-size="8.00" fill="#2b2b2b">92</text>
<text transform="translate(512.03,509.44) rotate(0.03) scale(1.0300,1)" font-size="8.00" fill="#2b2b2b">29</text>
<text transform="translate(526.30,509.44) rotate(0.03) scale(0.8150,1)" font-size="8.00" fill="#2b2b2b">AMY</text>
<text transform="translate(588.53,509.44) rotate(0.03) scale(1.0300,1)" font-size="8.00" fill="#2b2b2b">15</text>
<text transform="translate(602.70,509.44) rotate(0.03) scale(0.9000,1)" font-size="8.00" fill="#2b2b2b">F</text>
<text transform="translate(651.53,509.44) rotate(0.03) scale(1.0300,1)" font-size="8.00" fill="#2b2b2b">64</text>
<text transform="translate(678.46,509.44) rotate(0.03) scale(1.0300,1)" font-size="8.00" fill="#2b2b2b">112</text>
<text transform="translate(512.03,521.80) rotate(0.03) scale(1.0300,1)" font-size="8.00" fill="#2b2b2b">30</text>
<text transform="translate(526.30,521.80) rotate(0.03) scale(0.8150,1)" font-size="8.00" fill="#2b2b2b">ROBERT</text>
<text transform="translate(588.53,521.80) rotate(0.03) scale(1.0300,1)" font-size="8.00" fill="#2b2b2b">15</text>
<text transform="translate(602.70,521.80) rotate(0.03) scale(0.9000,1)" font-size="8.00" fill="#2b2b2b">M</text>
<text transform="translate(651.53,521.80) rotate(0.03) scale(1.0300,1)" font-size="8.00" fill="#2b2b2b">67</text>
<text transform="translate(677.86,521.80) rotate(0.03) scale(1.0300,1)" font-size="8.00" fill="#2b2b2b">128</text></svg>
<svg style="left:7px;top:53px" width="5" height="5" viewBox="0 0 5 5"><path d="M1.2 3.3 L3 1.6" stroke="#1c8fe0" stroke-width="1.3" stroke-linecap="round"/></svg>
<div id="tabbar"></div>
<div id="tab2"></div>
<svg style="left:0;top:0" width="999" height="45" viewBox="0 0 999 45">
 <!-- tab curve feet -->
 <path d="M156 22 Q161 22 161 17 L161 22 Z" fill="#fff"/>
 <path d="M321 22 Q316 22 316 17 L316 22 Z" fill="#fff"/>
 <!-- tab1 favicon -->
 <circle cx="16.2" cy="7.1" r="1.35" fill="#2e0c10"/>
 <path d="M13.6 9.6 L17.6 11.6 L22.2 9.6 M16.6 8.6 L17.6 11.6 L16.6 15.4" stroke="#0d3788" stroke-width="0.9" fill="none" stroke-linecap="round"/>
 <!-- tab1 close -->
 <path d="M148.3 8.3 L153.7 13.7 M153.7 8.3 L148.3 13.7" stroke="#fff" stroke-width="1.4" fill="none"/>
 <!-- globe -->
 <circle cx="173.5" cy="10.9" r="4.6" fill="#555a60"/>
 <path d="M169.6 9.6 q1.6 -0.6 2.6 0.4 q0.8 1 0 1.8 q-0.8 1 0 2.6" stroke="#fff" stroke-width="1.1" fill="none" stroke-linecap="round"/>
 <path d="M174.4 6.9 q-0.2 1.6 1.2 2 q1.4 0.4 1.6 1.8 q-1.4 0.2 -1.8 1.4" stroke="#fff" stroke-width="1.1" fill="none" stroke-linecap="round"/>
 <!-- tab2 close -->
 <path d="M303.5 8.5 L308.5 13.5 M308.5 8.5 L303.5 13.5" stroke="#3c4043" stroke-width="1.2" fill="none"/>
 <!-- plus -->
 <path d="M330.5 7 V15 M326.5 11 H334.5" stroke="#fff" stroke-width="1.6" fill="none"/>
 <!-- window controls -->
 <path d="M921.5 9.3 H928.5" stroke="#7fb6ea" stroke-width="1" fill="none"/>
 <path d="M950.5 7.5 h5.5 v5.5 h-5.5 z M952 7.5 v-1.3 h5.5 v5.5 h-1.5" stroke="#d6e8f8" stroke-width="0.9" fill="none"/>
 <path d="M980.5 6 L987.5 13 M987.5 6 L980.5 13" stroke="#fff" stroke-width="0.9" fill="none"/>
</svg>
<div id="addr"></div>
<div id="pill"></div>
<svg style="left:0;top:22px" width="999" height="23" viewBox="0 22 999 23">
 <!-- back -->
 <path d="M18.2 33.5 H10.5 M13.8 30 L10.3 33.5 L13.8 37" stroke="#bcc0c4" stroke-width="1.1" fill="none"/>
 <!-- forward -->
 <path d="M31 33.5 H38.7 M35.4 30 L38.9 33.5 L35.4 37" stroke="#bcc0c4" stroke-width="1.1" fill="none"/>
 <!-- reload -->
 <path d="M59.6 31.2 A4.1 4.1 0 1 0 60.1 35.2" stroke="#5f6368" stroke-width="1.2" fill="none"/>
 <path d="M57.2 31.8 H60.6 V28.4 Z" fill="#5f6368"/>
 <!-- home -->
 <path d="M72.3 33.6 L76.5 29.8 L80.7 33.6 M73.6 33 V37.2 H79.4 V33" stroke="#5f6368" stroke-width="1.1" fill="none"/>
 <!-- info -->
 <circle cx="102.3" cy="33.5" r="3.8" stroke="#5f6368" stroke-width="0.9" fill="none"/>
 <path d="M102.3 32.8 V35.6 M102.3 31.2 V32" stroke="#5f6368" stroke-width="0.9" fill="none"/>
 <path d="M132 29 V39" stroke="#8d9194" stroke-width="0.8"/>
 <!-- star -->
 <path d="M888 30 L889.1 32.6 L891.9 32.8 L889.8 34.6 L890.5 37.3 L888 35.8 L885.5 37.3 L886.2 34.6 L884.1 32.8 L886.9 32.6 Z" stroke="#5f6368" stroke-width="0.9" fill="none"/>
 <!-- ext1 -->
 <circle cx="913.8" cy="33.6" r="4" fill="#4d4d4d"/><circle cx="912.8" cy="32.8" r="2.7" fill="#f4f4f4"/>
 <!-- ext2 -->
 <rect x="929.5" y="28.7" width="10.5" height="10" fill="#8c8c8c"/>
 <path d="M949.3 29 V38.5" stroke="#dadce0" stroke-width="0.8"/>
 <circle cx="963.8" cy="33.6" r="7" fill="#3b5566"/>
 <circle cx="984.5" cy="30" r="0.9" fill="#5f6368"/><circle cx="984.5" cy="33.6" r="0.9" fill="#5f6368"/><circle cx="984.5" cy="37.2" r="0.9" fill="#5f6368"/>
</svg>


<svg class="tx" style="left:0;top:0" width="999" height="562" viewBox="0 0 999 562"><text transform="translate(28.70,13.80) rotate(0.03) scale(0.8993,1)" font-size="8.70" fill="#fff">Data points on a variability plot t</text></svg>
<div style="left:131px;top:3px;width:12px;height:16px;background:linear-gradient(90deg,rgba(0,120,215,0),#0078d7 80%)"></div>



<svg class="tx" style="left:0;top:0" width="999" height="562" viewBox="0 0 999 562"><text transform="translate(184.00,13.70) rotate(0.03) scale(0.8503,1)" font-size="8.60" fill="#3c4043">VC_Dashboard</text>
<text transform="translate(113.50,36.80) rotate(0.03) scale(0.8696,1)" font-size="9.20" fill="#5f6368">File</text>
<text transform="translate(137.80,36.80) rotate(0.03) scale(0.9699,1)" font-size="9.20" fill="#303336">C:/temp/VC_Dashboard.htm</text></svg>
<!-- scrollbars -->
<div style="left:988.6px;top:45px;width:10.4px;height:481px;background:#f1f1f1"></div>
<div style="left:989.6px;top:56.8px;width:9.4px;height:421.4px;background:#c1c1c1"></div>
<div style="left:0;top:526px;width:999px;height:10px;background:#f1f1f1"></div>
<div style="left:11.2px;top:527.1px;width:876.2px;height:8.7px;background:#c1c1c1"></div>
<div style="left:989px;top:526px;width:10px;height:10px;background:#dcdcdc"></div>
<svg style="left:0;top:45px" width="999" height="492" viewBox="0 45 999 492">
 <path d="M991.3 53.3 L993.8 50.6 L996.3 53.3 Z" fill="#a3a3a3"/>
 <path d="M991.3 518.3 L993.8 521 L996.3 518.3 Z" fill="#505050"/>
 <path d="M6.6 529 L3.9 531.5 L6.6 534 Z" fill="#a3a3a3"/>
 <path d="M981.4 529 L984.1 531.5 L981.4 534 Z" fill="#505050"/>
</svg>
<!-- taskbar -->
<div id="task"></div>
<div style="left:31px;top:535.8px;width:224px;height:26.2px;background:#f2f2f2;border-left:1.5px solid #fff"></div>
<div style="left:416.3px;top:535.8px;width:31.5px;height:26.2px;background:#465069"></div>
<div style="left:416.3px;top:560px;width:31.5px;height:2px;background:#86c3f0"></div>
<div style="left:451px;top:560px;width:27px;height:2px;background:#86c3f0"></div>
<div style="left:483.1px;top:560px;width:27px;height:2px;background:#86c3f0"></div>
<div style="left:515.4px;top:560px;width:27px;height:2px;background:#86c3f0"></div>
<svg style="left:0;top:536px" width="999" height="26" viewBox="0 536 999 26">
 <!-- windows logo -->
 <path d="M10.3 545.2 L14.6 544.6 V548.7 H10.3 Z M15.3 544.5 L20.8 543.7 V548.7 H15.3 Z M10.3 549.4 H14.6 V553.5 L10.3 552.9 Z M15.3 549.4 H20.8 V554.4 L15.3 553.6 Z" fill="#fff"/>
 <!-- search icon -->
 <circle cx="45.8" cy="547" r="3.1" stroke="#222" stroke-width="1" fill="none"/><path d="M43.6 549.4 L39.6 553.6" stroke="#222" stroke-width="1.1"/>
 <!-- cortana -->
 <circle cx="270.5" cy="548.9" r="4.4" stroke="#fff" stroke-width="1.5" fill="none"/>
 <!-- task view -->
 <path d="M297.3 546 h5.2 v6.2 h-5.2 z" stroke="#c9d1dd" stroke-width="0.9" fill="none"/>
 <path d="M295.9 544.9 h8 M295.9 553.3 h8 M296.2 544.9 v1.4 M296.2 551.9 v1.4 M303.6 544.9 v1.4 M303.6 551.9 v1.4" stroke="#c9d1dd" stroke-width="0.8" fill="none"/>
 <path d="M306 545.2 v1.5 M306 548 v5.3" stroke="#c9d1dd" stroke-width="1" fill="none"/>
 <!-- edge -->
 <path d="M329.1 549.6 A6.3 6.3 0 0 1 341.6 548.6 V550.8 H332.9 A3.3 3.3 0 0 0 340.6 552.6 V555.2 A6.4 6.4 0 0 1 329.1 551.4 Z" fill="#1f8fe8"/>
 <path d="M332.8 548.3 A2.9 2.9 0 0 1 338.2 548.3 Z" fill="#16213f"/>
 <path d="M329.1 549.6 Q330 545.2 333.6 543.5 Q330.6 546.6 331.2 549.6 Z" fill="#1f8fe8"/>
 <!-- folder -->
 <path d="M360 542.6 h4.8 l1.3 1.5 h8.3 v10.3 h-14.4 z" fill="#e9b43a"/><path d="M360 545.6 h14.4 v8.8 h-14.4z" fill="#fbd869"/><path d="M363 549.6 h8.4 v4.8 h-8.4z" fill="#3c8fe2"/><path d="M364.8 552.2 h4.8 v2.2 h-4.8z" fill="#fbd869"/>
 <!-- firefox -->
 <circle cx="399.5" cy="549.3" r="6.9" fill="#f4592b"/>
 <path d="M393.2 546.4 Q394.4 542.6 397.8 543.2 Q400.6 540.4 401.8 540.6 Q402.4 543 404.8 544.8 Q407.6 548.6 405.6 553 Q404 548.6 399.4 547.4 Q395.4 546.8 393.2 546.4 Z" fill="#ffd034"/>
 <circle cx="398.6" cy="548.6" r="3" fill="#9a3fd8"/><circle cx="398.2" cy="549" r="1.7" fill="#5d3fd0"/>
 <!-- chrome -->
 <circle cx="431.7" cy="548.9" r="7.2" fill="#e2473a"/>
 <path d="M431.7 548.9 L425.46 552.5 A7.2 7.2 0 0 0 431.7 556.1 L435.3 549.8 Z" fill="#35a655"/>
 <path d="M425.46 552.5 A7.2 7.2 0 0 1 425.6 545 L429 550.6 Z" fill="#35a655"/>
 <path d="M431.7 545.5 H438.05 A7.2 7.2 0 0 1 431.7 556.1 L435.4 549.8 Z" fill="#f8c52e"/>
 <circle cx="431.7" cy="548.9" r="3.35" fill="#fff"/><circle cx="431.7" cy="548.9" r="2.6" fill="#4a8cf1"/>
 <!-- outlook -->
 <rect x="460" y="541.8" width="10.6" height="11.6" fill="#1d87d6"/><rect x="465.3" y="541.8" width="5.3" height="5.4" fill="#45b4f2"/><rect x="460" y="547.2" width="5.3" height="3" fill="#1471c0"/>
 <rect x="455.6" y="545" width="7.8" height="7.8" rx="0.9" fill="#0f6cbd"/><circle cx="459.5" cy="548.9" r="1.9" stroke="#fff" stroke-width="1" fill="none"/>
 <rect x="462.6" y="551" width="10.4" height="7.2" fill="#f3c58b"/><path d="M462.6 551 L467.8 555 L473 551" stroke="#fff" stroke-width="0.7" fill="none"/>
 <!-- jmp -->
 <path d="M488.8 541.9 H496.5 V544.2 H500.6 V547.4 H497 V550.4 H494.4 V553.8 H488.8 Z" fill="#2fb83a"/>
 <path d="M488.8 542.3 h7.4 v1.5 h-7.4z M488.8 545 h9 v1.6 h-9z M488.8 548 h6 v1.5 h-6z M488.8 551.2 h5.2 v1.7 h-5.2z" fill="#6be86a"/>
 <circle cx="495.8" cy="545.2" r="1.35" fill="#050505"/>
 <path d="M492.2 548.2 Q497 549.4 503.6 548.6 M499.4 546.4 Q498.4 551.4 496 555.2" stroke="#1a7acc" stroke-width="1.5" fill="none" stroke-linecap="round"/>
 <!-- powerpoint -->
 <circle cx="530.2" cy="548.7" r="6.9" fill="#e3573a"/><path d="M530.2 541.8 A6.9 6.9 0 0 1 537.1 548.7 H530.2 Z" fill="#f28e6e"/><path d="M530.2 548.7 H537.1 A6.9 6.9 0 0 1 530.2 555.6 Z" fill="#d0432a"/>
 <rect x="520.8" y="545" width="7.8" height="8" rx="0.9" fill="#c43e1c"/>
 <!-- systray -->
 <path d="M826.3 550.7 L830.3 546.8 L834.3 550.7" stroke="#fff" stroke-width="1" fill="none"/>
 <path d="M840.65 545.60 L843.00 544.05 L845.35 545.60 L843.00 547.15 Z M845.35 545.60 L847.70 544.05 L850.05 545.60 L847.70 547.15 Z M840.65 548.70 L843.00 547.15 L845.35 548.70 L843.00 550.25 Z M845.35 548.70 L847.70 547.15 L850.05 548.70 L847.70 550.25 Z M843.15 551.60 L845.35 550.20 L847.55 551.60 L845.35 553.00 Z" fill="#fff"/>
 <path d="M857.6 546.4 h9.4 v5.8 h-9.4z" fill="#e6e8ec"/><path d="M856.3 547.8 v3 M855.8 545 l2.6 2.2" stroke="#fff" stroke-width="0.9"/><path d="M859 547.6 h6.6 v3.4 h-6.6z" fill="#aab0bc"/>
 <path d="M873.2 553.6 A7.6 7.6 0 0 1 880.8 546 M875.3 553.6 A5.5 5.5 0 0 1 880.8 548.1 M877.4 553.6 A3.4 3.4 0 0 1 880.8 550.2" stroke="#c4c9d2" stroke-width="0.8" fill="none"/><circle cx="880.2" cy="552.9" r="1.1" fill="#fff"/>
 <path d="M887.4 548 h1.8 l2.5 -2.3 v7.8 l-2.5 -2.3 h-1.8z" stroke="#fff" stroke-width="0.8" fill="none"/><path d="M893.4 547.8 l3.2 3.2 M896.6 547.8 l-3.2 3.2" stroke="#fff" stroke-width="0.8"/>
 <g stroke="#fff" stroke-width="1" fill="none"><ellipse cx="908.2" cy="551.4" rx="3.4" ry="1.9" transform="rotate(-45 908.2 551.4)"/><ellipse cx="912.4" cy="547.4" rx="3.4" ry="1.9" transform="rotate(-45 912.4 547.4)"/><path d="M912.6 544.4 l1.4 -0.4"/></g>
 <path d="M972.3 543.6 h10.6 v7.6 h-6.8 l-1.8 2 v-2 h-2z" fill="#fff"/><path d="M974 545.6 h7.2 M974 547.4 h7.2 M974 549.2 h4.4" stroke="#16213f" stroke-width="0.55"/>
 <circle cx="982.3" cy="554" r="4.9" fill="#1d222b" stroke="#8d939c" stroke-width="0.6"/>
 <path d="M996.6 536 V562" stroke="#4a5570" stroke-width="0.6"/>
</svg>








<svg class="tx" style="left:0;top:0" width="999" height="562" viewBox="0 0 999 562"><text transform="translate(932.23,36.40) rotate(0.03)" font-size="6.60" fill="#e4e4e4">G</text>
<text transform="translate(961.94,35.20) rotate(0.03)" font-size="7.80" fill="#fff">g</text>
<text transform="translate(57.60,552.40) rotate(0.03)" font-size="9.60" fill="#2b2b2b">Type here to search</text>
<text transform="translate(927.50,545.90) rotate(0.03) scale(0.8954,1)" font-size="8.30" fill="#fff">10:24 AM</text>
<text transform="translate(923.90,557.60) rotate(0.03) scale(0.9292,1)" font-size="8.30" fill="#fff">12/23/2019</text>
<text transform="translate(978.61,556.70) rotate(0.03) scale(0.9200,1)" font-size="7.40" fill="#fff">20</text>
<text transform="translate(522.63,551.40) rotate(0.03)" font-size="6.20" fill="#fff" font-weight="bold">P</text></svg>
</body></html>
